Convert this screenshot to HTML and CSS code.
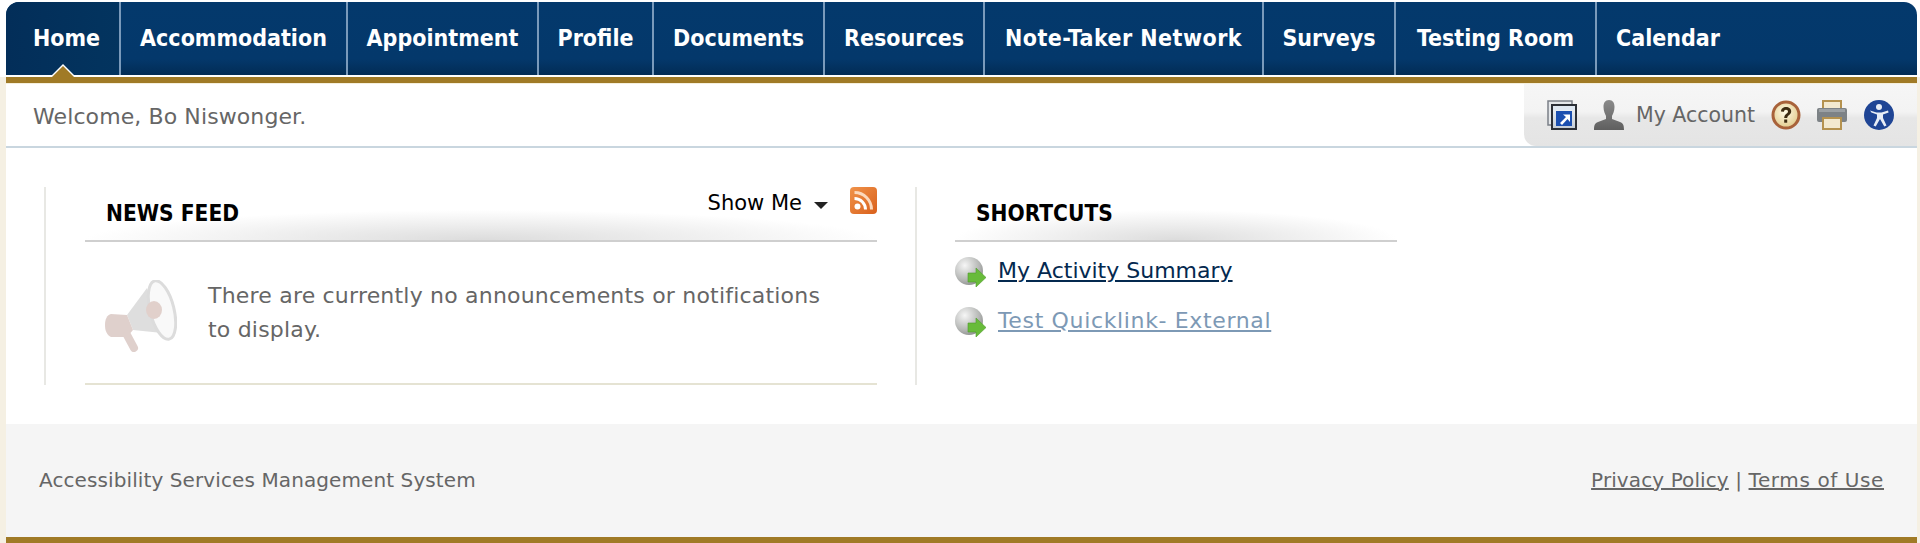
FILE: index.html
```html
<!DOCTYPE html>
<html lang="en">
<head>
<meta charset="utf-8">
<title>Accessibility Services Management System</title>
<link rel="stylesheet" href="styles.css">
</head>
<body>
<div class="shell">
  <nav class="nav">
    <a class="nav-item active" href="#">Home</a>
    <a class="nav-item" href="#">Accommodation</a>
    <a class="nav-item" href="#">Appointment</a>
    <a class="nav-item" href="#">Profile</a>
    <a class="nav-item" href="#">Documents</a>
    <a class="nav-item" href="#">Resources</a>
    <a class="nav-item wide" href="#">Note-Taker Network</a>
    <a class="nav-item" href="#">Surveys</a>
    <a class="nav-item" href="#">Testing Room</a>
    <a class="nav-item last" href="#">Calendar</a>
  </nav>
  <div class="gold-rule"></div>
  <div class="subbar">
    <div class="welcome">Welcome, Bo Niswonger.</div>
    <div class="tools">
      <svg class="tool-icon" viewBox="0 0 30 30" aria-hidden="true">
        <defs><linearGradient id="win" x1="0" y1="0" x2="0" y2="1"><stop offset="0" stop-color="#f4f6f8"/><stop offset="1" stop-color="#c3ccd6"/></linearGradient></defs>
        <rect x="1" y="1" width="24" height="24" fill="#e4e7ea" stroke="#7b8088" stroke-width="1.5"/>
        <rect x="5" y="5" width="24" height="24" fill="url(#win)" stroke="#2b2f36" stroke-width="2"/>
        <rect x="6" y="6" width="22" height="4" fill="#dfe8f2"/>
        <rect x="9" y="11" width="16" height="15" fill="#1b4fb0"/>
        <path d="M13 23l6-6-3-2.500h7v7.500l-2.500-3-5.500 6z" fill="#fff"/>
      </svg>
      <svg class="tool-icon person" viewBox="0 0 30 30" aria-hidden="true">
        <defs><linearGradient id="psn" x1="0" y1="0" x2="0" y2="1"><stop offset="0" stop-color="#8a8a8a"/><stop offset="1" stop-color="#5f5f5f"/></linearGradient></defs>
        <path d="M15 0c4 0 5.500 3 5.500 7 0 4-1.500 7-2.500 9v3l8 3c3 1 4 3 4 8H0c0-5 1-7 4-8l8-3v-3c-1-2-2.500-5-2.500-9s1.500-7 5.500-7z" fill="url(#psn)"/>
      </svg>
      <span class="account">My Account</span>
      <svg class="tool-icon help" viewBox="0 0 30 30" aria-hidden="true">
        <defs><radialGradient id="hlp" cx=".45" cy=".4" r=".6"><stop offset="0" stop-color="#fffbe6"/><stop offset="1" stop-color="#e2cc8e"/></radialGradient></defs>
        <circle cx="15" cy="15" r="13" fill="url(#hlp)" stroke="#a8623a" stroke-width="3"/>
        <path d="M10 11.500c0-3 2.300-4.500 5-4.500 3 0 5.200 1.700 5.200 4.300 0 3.800-4 3.700-4 6.700h-3c0-4 3.800-4.200 3.800-6.500 0-1-.8-1.700-2-1.700-1.300 0-2 .8-2 1.900z" fill="#3d2c12"/>
        <rect x="13.200" y="19.500" width="3" height="3.200" fill="#3d2c12"/>
      </svg>
      <svg class="tool-icon printer" viewBox="0 0 30 30" aria-hidden="true">
        <rect x="6" y="1" width="18" height="10" fill="#f3e9cf" stroke="#b5924f" stroke-width="2"/>
        <rect x="0" y="8" width="30" height="14" rx="2" fill="#7d8286"/>
        <rect x="2" y="9" width="26" height="3" fill="#9ba0a4"/>
        <rect x="6" y="18" width="18" height="11" fill="#f3e9cf" stroke="#b5924f" stroke-width="2"/>
      </svg>
      <svg class="tool-icon access" viewBox="0 0 30 30" aria-hidden="true">
        <circle cx="15" cy="15" r="15" fill="#1f4595"/>
        <circle cx="15" cy="7" r="3" fill="#e8edf6"/>
        <path d="M6 10.500l6.500 2h5l6.500-2 .6 2-5.600 2v3.500l3.500 7.500-2.200 1-4.300-7.500-4.300 7.500-2.200-1 3.500-7.500v-3.500l-5.600-2z" fill="#e8edf6"/>
      </svg>
    </div>
  </div>
  <main class="main">
    <section class="col news">
      <header class="col-head">
        <h2 class="col-title">NEWS FEED</h2>
        <div class="head-actions">
          <span class="show-me">Show Me</span>
          <span class="caret"></span>
          <svg class="rss" viewBox="0 0 27 27" aria-hidden="true">
            <defs><linearGradient id="rs" x1="0" y1="0" x2="1" y2="1"><stop offset="0" stop-color="#f0934a"/><stop offset="1" stop-color="#d9601c"/></linearGradient></defs>
            <rect width="27" height="27" rx="4" fill="url(#rs)"/>
            <circle cx="7.500" cy="19.500" r="3" fill="#fff"/>
            <path d="M4.500 11.500a11 11 0 0 1 11 11" fill="none" stroke="#fff" stroke-width="3"/>
            <path d="M4.500 5.500a17 17 0 0 1 17 17" fill="none" stroke="#fbd9bd" stroke-width="3"/>
          </svg>
        </div>
      </header>
      <div class="message">
        <svg class="horn" viewBox="0 0 75 75" aria-hidden="true">
          <path d="M25 35L45 8 60 53 31 50z" fill="#d9d9d9"/>
          <ellipse cx="60" cy="30" rx="12" ry="30" transform="rotate(-14 60 30)" fill="#f8f8f8" stroke="#d6d6d6" stroke-width="3"/>
          <ellipse cx="52" cy="30" rx="8" ry="9" fill="#dcc8c3"/>
          <path d="M3 45c0-6 2-10 6-11l16 1 6 15-6 7H9c-4-2-6-6-6-12z" fill="#dac8c4"/>
          <path d="M25 55l7 13" fill="none" stroke="#dac8c4" stroke-width="8" stroke-linecap="round"/>
        </svg>
        <p class="message-text">There are currently no announcements or notifications<br>to display.</p>
      </div>
    </section>
    <section class="col shortcuts">
      <header class="col-head">
        <h2 class="col-title">SHORTCUTS</h2>
      </header>
      <ul class="links">
        <li class="link-row">
          <svg class="link-icon" viewBox="0 0 31 30" aria-hidden="true">
            <defs><radialGradient id="orb" cx=".35" cy=".3" r=".75"><stop offset="0" stop-color="#f6f6f6"/><stop offset=".7" stop-color="#b4b6b4"/><stop offset="1" stop-color="#8e908e"/></radialGradient></defs>
            <circle cx="14" cy="14" r="14" fill="url(#orb)"/>
            <path d="M13 16h8v-5l10 9.500-10 9.500v-5h-8z" fill="#68bb3a" stroke="#4f9a2c" stroke-width=".6"/>
          </svg>
          <a class="link dark" href="#">My Activity Summary</a>
        </li>
        <li class="link-row">
          <svg class="link-icon" viewBox="0 0 31 30" aria-hidden="true">
            <circle cx="14" cy="14" r="14" fill="url(#orb)"/>
            <path d="M13 16h8v-5l10 9.500-10 9.500v-5h-8z" fill="#68bb3a" stroke="#4f9a2c" stroke-width=".6"/>
          </svg>
          <a class="link light" href="#">Test Quicklink- External</a>
        </li>
      </ul>
    </section>
  </main>
  <footer class="footer">
    <span class="footer-name">Accessibility Services Management System</span>
    <span class="footer-links"><a href="#">Privacy Policy</a> | <a class="terms" href="#">Terms of Use</a></span>
  </footer>
  <div class="gold-base"></div>
</div>
</body>
</html>
```
FILE: styles.css
```css
* { box-sizing: border-box; }
html, body { margin: 0; height: 100%; }
body {
  background: linear-gradient(#fff 77px, #f5f0e3 77px);
  font-family: "DejaVu Sans", "Liberation Sans", sans-serif;
  overflow: hidden;
}
.shell {
  padding: 2px 3px 0 6px;
  height: 543px;
  display: flex;
  flex-direction: column;
}
.nav {
  height: 73px;
  flex: none;
  display: grid;
  grid-template-columns: 115px 227px 191px 115px 171px 160px 279px 132px 201px 1fr;
  background: linear-gradient(#04396c 0, #04386b 78%, #022c55 100%);
  border-top-left-radius: 13px;
  border-top-right-radius: 13px;
  margin-bottom: 2px;
}
.nav-item {
  display: flex;
  align-items: center;
  justify-content: center;
  color: #fff;
  font-family: "DejaVu Sans", sans-serif;
  font-stretch: condensed;
  font-size: 23px;
  font-weight: 700;
  text-decoration: none;
  border-right: 2px solid #7a9abb;
  padding-bottom: 1px;
  position: relative;
}
.nav-item.wide { letter-spacing: .45px; }
.nav-item.active {
  background: linear-gradient(90deg, #032e59, #03345f);
  border-top-left-radius: 13px;
  padding-left: 8px;
}
.nav-item.active::after {
  content: "";
  position: absolute;
  left: 46px;
  bottom: -2px;
  border-left: 11px solid transparent;
  border-right: 11px solid transparent;
  border-bottom: 11px solid #a07a26;
  filter: drop-shadow(0 -2px 0 #fff);
}
.nav-item.last {
  border-right: 0;
  justify-content: flex-start;
  padding-left: 19px;
}
.gold-rule {
  height: 7px;
  flex: none;
  background: linear-gradient(#a07a26 0, #a07a26 80%, #f5efdc 80%);
}
.subbar {
  height: 64px;
  flex: none;
  background: #fff;
  border-bottom: 2px solid #c9d6df;
  display: flex;
  justify-content: space-between;
  align-items: stretch;
}
.welcome {
  font-size: 22px;
  letter-spacing: .1px;
  color: #666;
  padding: 20px 0 0 27px;
}
.tools {
  width: 393px;
  background: linear-gradient(#f6f6f6 0, #f3f3f3 45%, #e7e7e7 55%, #e4e4e4 100%);
  border-bottom-left-radius: 12px;
  display: flex;
  align-items: center;
  padding: 0 0 0 23px;
}
.tool-icon { width: 30px; height: 30px; flex: none; filter: blur(.4px); }
.person { margin-left: 17px; }
.account {
  font-size: 20.500px;
  color: #666;
  margin: 0 16px 0 12px;
  white-space: nowrap;
}
.printer { margin-left: 16px; }
.access { margin-left: 17px; }
.main {
  height: 276px;
  flex: none;
  background: #fff;
  display: flex;
  align-items: flex-start;
  padding: 39px 0 0 38px;
}
.col {
  height: 198px;
  border-left: 2px solid #e8e8e4;
  display: flex;
  flex-direction: column;
}
.news { width: 871px; padding: 0 38px 0 39px; }
.shortcuts { width: 482px; padding-left: 38px; }
.col-head {
  height: 55px;
  flex: none;
  border-bottom: 2px solid #cfcfcf;
  display: flex;
  justify-content: space-between;
  background: radial-gradient(ellipse 50% 30px at 50% 100%, #dcdcdc, rgba(255, 255, 255, 0));
}
.col-title {
  margin: 0;
  font-stretch: condensed;
  font-size: 22.500px;
  font-weight: 700;
  color: #000;
  padding: 13px 0 0 21px;
}
.head-actions { display: flex; align-items: flex-start; }
.show-me { font-size: 21px; color: #000; padding-top: 4px; }
.caret {
  width: 0;
  height: 0;
  margin: 15px 22px 0 12px;
  border-left: 7px solid transparent;
  border-right: 7px solid transparent;
  border-top: 7px solid #222;
}
.rss { width: 27px; height: 27px; }
.message {
  flex: 1;
  display: flex;
  align-items: flex-start;
  border-bottom: 2px solid #e5e3d3;
  padding: 38px 0 0 17px;
}
.horn { width: 75px; height: 75px; flex: none; filter: blur(.6px); opacity: .85; }
.message-text {
  margin: -1px 0 0 31px;
  font-size: 22px;
  letter-spacing: .2px;
  line-height: 34px;
  color: #666;
}
.links { list-style: none; margin: 15px 0 0; padding: 0; }
.link-row { display: flex; align-items: center; height: 30px; margin-bottom: 20px; }
.link-icon { width: 31px; height: 30px; flex: none; margin-right: 12px; }
.link { font-size: 22px; margin-bottom: 3px; }
.dark { color: #04294f; }
.light { color: #7d99b5; letter-spacing: .65px; }
.footer {
  flex: none;
  height: 113px;
  background: #f5f5f5;
  display: flex;
  justify-content: space-between;
  align-items: center;
  padding: 0 33px 2px 33px;
  font-size: 20px;
  letter-spacing: .1px;
  color: #666;
}
.footer-links a { color: #666; }
.footer-links .terms { letter-spacing: .6px; }
.gold-base { height: 6px; flex: none; background: #a07a26; }
```
